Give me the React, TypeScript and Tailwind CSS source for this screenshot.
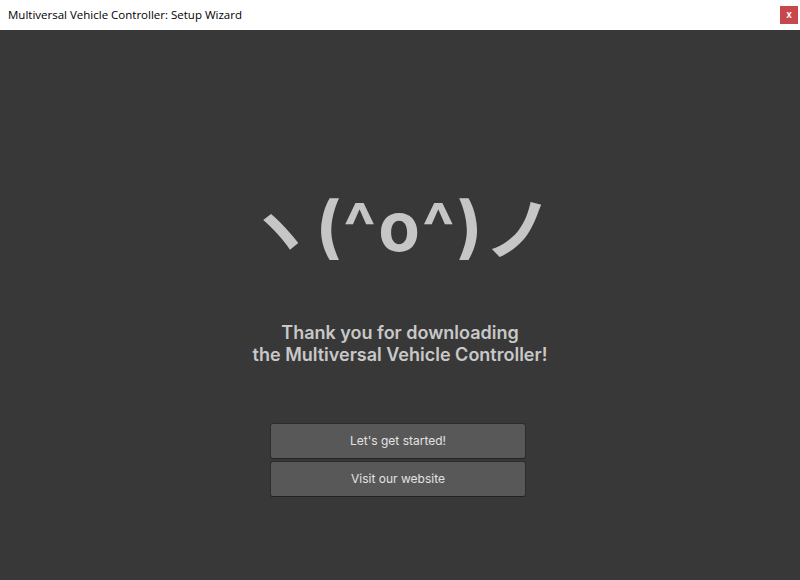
export default function App() {
  return (
    <div className="w-[800px] h-[580px] flex flex-col bg-[#383838]" style={{ fontFamily: 'Inter, "Noto Sans CJK JP", sans-serif' }}>
      {/* title bar */}
      <div className="h-[30px] bg-white flex items-center justify-between pl-[8px] pr-[2px]">
        <span className="text-[11.5px] text-black" style={{ fontFamily: '"Open Sans", "Noto Sans", sans-serif' }}>
          Multiversal Vehicle Controller: Setup Wizard
        </span>
        <div className="w-[18px] h-[18px] bg-[#c8474d] text-white text-[10px] font-semibold flex items-center justify-center leading-none pb-[2px]">
          x
        </div>
      </div>

      <div className="flex-1 flex flex-col items-center">
        <div className="mt-[148px] h-[96px] flex items-center text-[#c6c6c6] text-[68px] font-bold leading-none tracking-[2px]">
          <span style={{ fontFamily: '"Noto Sans CJK JP", sans-serif' }}>ヽ</span>
          <span>(^o^)</span>
          <span style={{ fontFamily: '"Noto Sans CJK JP", sans-serif' }}>ノ</span>
        </div>

        <div className="mt-[48px] text-center text-[#c8c8c8] text-[18px] font-semibold leading-[22px]">
          <div>Thank you for downloading</div>
          <div>the Multiversal Vehicle Controller!</div>
        </div>

        <div className="mt-[57px] mr-[4px] flex flex-col gap-[2px]">
          <button className="w-[256px] h-[36px] bg-[#585858] border border-[#2c2c2c] border-b-[#222222] rounded-[3px] text-[12px] text-[#e2e2e2]">
            Let's get started!
          </button>
          <button className="w-[256px] h-[36px] bg-[#585858] border border-[#2c2c2c] border-b-[#222222] rounded-[3px] text-[12px] text-[#e2e2e2]">
            Visit our website
          </button>
        </div>
      </div>
    </div>
  );
}
